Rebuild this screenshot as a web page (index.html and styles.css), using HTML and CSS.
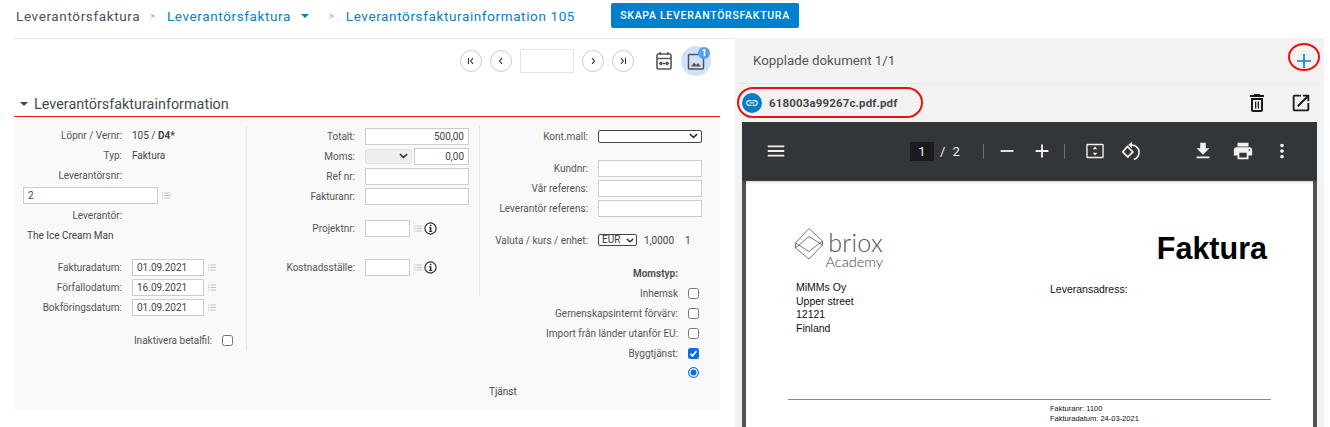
FILE: index.html
```html
<!DOCTYPE html>
<html lang="sv">
<head>
<meta charset="utf-8">
<title>Leverantörsfaktura</title>
<link rel="stylesheet" href="styles.css">
</head>
<body>
<header class="topbar">
  <span class="crumb">Leverantörsfaktura</span>
  <span class="sep">&gt;</span>
  <span class="crumb link">Leverantörsfaktura</span>
  <span class="caret-blue"></span>
  <span class="sep sep2">&gt;</span>
  <span class="crumb link">Leverantörsfakturainformation 105</span>
  <button class="create">SKAPA LEVERANTÖRSFAKTURA</button>
</header>
<main class="main">
  <section class="left">
    <div class="pager">
      <button class="round"><svg viewBox="0 0 10 10" class="pg"><path d="M2.5 2v6M7 2.2 4.6 5 7 7.8"/></svg></button>
      <button class="round"><svg viewBox="0 0 10 10" class="pg"><path d="M6 2.2 3.6 5 6 7.8"/></svg></button>
      <input class="pageinput" type="text">
      <button class="round"><svg viewBox="0 0 10 10" class="pg"><path d="M4 2.2 6.4 5 4 7.8"/></svg></button>
      <button class="round"><svg viewBox="0 0 10 10" class="pg"><path d="M3 2.2 5.4 5 3 7.8M7.5 2v6"/></svg></button>
      <svg class="cal" viewBox="0 0 18 20"><path d="M5 1v3M13 1v3"/><rect x="2" y="3" width="14" height="15" rx="1.5"/><path d="M2 7.5h14M5 12.5h8M6.5 10.8 4.8 12.5l1.7 1.7M11.5 10.8l1.7 1.7-1.7 1.7"/></svg>
      <div class="imgbtn">
        <svg viewBox="0 0 18 18" class="imgicon"><rect x="1.5" y="1.5" width="15" height="14.5" rx="1"/><path class="fill" d="M4 13.5 7 9.5l2.2 2.5L11 10l3 3.5z"/></svg>
        <span class="badge">1</span>
      </div>
    </div>
    <h2 class="section"><span class="caret-dark"></span>Leverantörsfakturainformation</h2>
    <form class="form">
      <div class="col col1">
        <div class="row first"><span class="lbl">Löpnr / Vernr:</span><span class="val">105 / <b>D4*</b></span></div>
        <div class="row"><span class="lbl">Typ:</span><span class="val">Faktura</span></div>
        <div class="row"><span class="lbl">Leverantörsnr:</span></div>
        <div class="row wide"><input class="inp supplier" type="text" value="2"><svg class="list" viewBox="0 0 8 7"><path d="M0 1h1.4M2.4 1H8M0 3.5h1.4M2.4 3.5H8M0 6h1.4M2.4 6H8"/></svg></div>
        <div class="row"><span class="lbl">Leverantör:</span></div>
        <div class="row wide"><span class="val name">The Ice Cream Man</span></div>
        <div class="row dates"><span class="lbl">Fakturadatum:</span><input class="inp date" type="text" value="01.09.2021"><svg class="list" viewBox="0 0 8 7"><path d="M0 1h1.4M2.4 1H8M0 3.5h1.4M2.4 3.5H8M0 6h1.4M2.4 6H8"/></svg></div>
        <div class="row"><span class="lbl">Förfallodatum:</span><input class="inp date" type="text" value="16.09.2021"><svg class="list" viewBox="0 0 8 7"><path d="M0 1h1.4M2.4 1H8M0 3.5h1.4M2.4 3.5H8M0 6h1.4M2.4 6H8"/></svg></div>
        <div class="row"><span class="lbl">Bokföringsdatum:</span><input class="inp date" type="text" value="01.09.2021"><svg class="list" viewBox="0 0 8 7"><path d="M0 1h1.4M2.4 1H8M0 3.5h1.4M2.4 3.5H8M0 6h1.4M2.4 6H8"/></svg></div>
        <div class="row inactive"><span class="lbl lbl-long">Inaktivera betalfil:</span><input class="chk" type="checkbox"></div>
      </div>
      <div class="col col2">
        <div class="row"><span class="lbl">Totalt:</span><input class="inp full num" type="text" value="500,00"></div>
        <div class="row"><span class="lbl">Moms:</span><select class="sel moms"><option></option></select><input class="inp vat num" type="text" value="0,00"></div>
        <div class="row"><span class="lbl">Ref nr:</span><input class="inp full" type="text"></div>
        <div class="row"><span class="lbl">Fakturanr:</span><input class="inp full" type="text"></div>
        <div class="row proj"><span class="lbl">Projektnr:</span><input class="inp short" type="text"><svg class="list" viewBox="0 0 8 7"><path d="M0 1h1.4M2.4 1H8M0 3.5h1.4M2.4 3.5H8M0 6h1.4M2.4 6H8"/></svg><svg class="info" viewBox="0 0 13 13"><circle cx="6.5" cy="6.5" r="5.6"/><path class="i" d="M5 5.3h2.4v3.9h1v.9H4.8v-.9h1V6.2H5zM5.8 2.8h1.6v1.5H5.8z"/></svg></div>
        <div class="row cost"><span class="lbl">Kostnadsställe:</span><input class="inp short" type="text"><svg class="list" viewBox="0 0 8 7"><path d="M0 1h1.4M2.4 1H8M0 3.5h1.4M2.4 3.5H8M0 6h1.4M2.4 6H8"/></svg><svg class="info" viewBox="0 0 13 13"><circle cx="6.5" cy="6.5" r="5.6"/><path class="i" d="M5 5.3h2.4v3.9h1v.9H4.8v-.9h1V6.2H5zM5.8 2.8h1.6v1.5H5.8z"/></svg></div>
      </div>
      <div class="col col3">
        <div class="row"><span class="lbl">Kont.mall:</span><select class="sel kont"><option></option></select></div>
        <div class="row cust"><span class="lbl">Kundnr:</span><input class="inp full" type="text"></div>
        <div class="row"><span class="lbl">Vår referens:</span><input class="inp full" type="text"></div>
        <div class="row"><span class="lbl">Leverantör referens:</span><input class="inp full" type="text"></div>
        <div class="row cur"><span class="lbl">Valuta / kurs / enhet:</span><select class="sel eur"><option>EUR</option></select><span class="val rate">1,0000</span><span class="val unit">1</span></div>
        <div class="row vat-head"><span class="lbl vl"><b>Momstyp:</b></span></div>
        <div class="row"><span class="lbl vl">Inhemsk</span><input class="chk" type="checkbox"></div>
        <div class="row"><span class="lbl vl">Gemenskapsinternt förvärv:</span><input class="chk" type="checkbox"></div>
        <div class="row"><span class="lbl vl">Import från länder utanför EU:</span><input class="chk" type="checkbox"></div>
        <div class="row"><span class="lbl vl">Byggtjänst:</span><input class="chk" type="checkbox" checked></div>
        <div class="row radio-row"><span class="lbl vl"></span><input class="rad" type="radio" checked></div>
        <div class="row tj"><span class="val">Tjänst</span></div>
      </div>
    </form>
  </section>
  <aside class="right">
    <div class="dochead">
      <span class="doctitle">Kopplade dokument 1/1</span>
      <svg class="plus" viewBox="0 0 14 14"><path d="M7 0v14M0 7h14"/></svg>
      <span class="ring ring-plus"></span>
    </div>
    <div class="docrow">
      <span class="linkdot"><svg viewBox="0 0 24 24"><path d="M3.9 12c0-1.71 1.39-3.1 3.1-3.1h4V7H7c-2.76 0-5 2.24-5 5s2.24 5 5 5h4v-1.9H7c-1.71 0-3.1-1.39-3.1-3.1zM8 13h8v-2H8v2zm9-6h-4v1.9h4c1.71 0 3.1 1.39 3.1 3.1s-1.39 3.1-3.1 3.1h-4V17h4c2.76 0 5-2.24 5-5s-2.24-5-5-5z"/></svg></span>
      <span class="docname">618003a99267c.pdf.pdf</span>
      <svg class="docicon trash" viewBox="0 0 24 24"><path d="M6 19c0 1.1.9 2 2 2h8c1.1 0 2-.9 2-2V7H6v12zM8 9h8v10H8V9zm7.5-5l-1-1h-5l-1 1H5v2h14V4z"/><path d="M10 10.5h1.3v7H10zM12.7 10.5H14v7h-1.3z"/></svg>
      <svg class="docicon open" viewBox="0 0 24 24"><path d="M19 19H5V5h7V3H5c-1.11 0-2 .9-2 2v14c0 1.1.89 2 2 2h14c1.1 0 2-.9 2-2v-7h-2v7zM14 3v2h3.59l-9.83 9.83 1.41 1.41L19 6.41V10h2V3h-7z"/></svg>
      <span class="ring ring-doc"></span>
    </div>
    <div class="viewer">
      <div class="pdfbar">
        <svg class="pi menu" viewBox="0 0 24 24"><path d="M3 18h18v-2H3v2zm0-5h18v-2H3v2zm0-7v2h18V6H3z"/></svg>
        <span class="pnum">1</span><span class="ptxt slash">/</span><span class="ptxt">2</span>
        <span class="pdiv d1"></span>
        <svg class="pi minus" viewBox="0 0 24 24"><path d="M5 11h14v2H5z"/></svg>
        <svg class="pi plusw" viewBox="0 0 24 24"><path d="M19 13h-6v6h-2v-6H5v-2h6V5h2v6h6v2z"/></svg>
        <span class="pdiv d2"></span>
        <svg class="pi fit" viewBox="0 0 24 24"><path d="M4 4h16a1.5 1.5 0 0 1 1.500 1.500v13A1.500 1.500 0 0 1 20 20H4a1.500 1.500 0 0 1-1.500-1.500v-13A1.500 1.500 0 0 1 4 4zm0 1.600V18.400h16V5.600z"/><path d="M12 7l2.500 3h-5zM12 17l-2.500-3h5z"/></svg>
        <svg class="pi rot" viewBox="0 0 24 24"><path d="M8 7 14 13l-5.500 5.500L3 13z" class="outline"/><path class="outline" d="M10.500 5.500H13a8 8 0 0 1 2 15.700"/><path d="M13 2v7L9 5.500z"/></svg>
        <svg class="pi dl" viewBox="0 0 24 24"><path d="M19 9h-4V3H9v6H5l7 7 7-7zM5 18v2h14v-2H5z"/></svg>
        <svg class="pi pr" viewBox="0 0 24 24"><path d="M19 8H5c-1.660 0-3 1.340-3 3v6h4v4h12v-4h4v-6c0-1.660-1.340-3-3-3zm-3 11H8v-5h8v5zm3-7c-.55 0-1-.45-1-1s.45-1 1-1 1 .45 1 1-.45 1-1 1zm-1-9H6v4h12V3z"/></svg>
        <svg class="pi more" viewBox="0 0 24 24"><path d="M12 8c1.100 0 2-.9 2-2s-.9-2-2-2-2 .9-2 2 .9 2 2 2zm0 2c-1.100 0-2 .9-2 2s.9 2 2 2 2-.9 2-2-.9-2-2-2zm0 6c-1.100 0-2 .9-2 2s.9 2 2 2 2-.9 2-2-.9-2-2-2z"/></svg>
      </div>
      <div class="pdfarea">
        <div class="page">
          <div class="page-top">
            <div class="logo">
              <svg class="cube" viewBox="0 0 28 32"><path d="M14 .5 27.500 13 14 23.500.5 15zM14 8.500 27.500 17 14 31 .5 20zM.5 15v5M27.500 13v4"/></svg>
              <div class="wordmark"><span class="briox">briox</span><span class="academy">Academy</span></div>
            </div>
            <div class="faktura">Faktura</div>
          </div>
          <div class="addr">
            <div class="addr-from">MiMMs Oy<br>Upper street<br>12121<br>Finland</div>
            <div class="addr-to">Leveransadress:</div>
          </div>
          <div class="pagerule"></div>
          <div class="meta">Fakturanr: 1100<br>Fakturadatum: 24-03-2021</div>
        </div>
      </div>
    </div>
  </aside>
</main>
</body>
</html>
```

FILE: styles.css
```css
* { box-sizing: border-box; }
html, body { margin: 0; height: 427px; overflow: hidden; background: #fff; }
body { font-family: Roboto, "Liberation Sans", sans-serif; color: #444; font-size: 10px; }

.topbar { display: flex; align-items: center; height: 39px; margin-left: 14px; width: 721px; padding: 0 0 7px 2px; border-bottom: 1px solid #e6e6e6; white-space: nowrap; }
.crumb { font-size: 13.5px; letter-spacing: .62px; color: #48525a; }
.crumb.link { color: #0580c8; }
.sep { color: #999; font-size: 9px; margin: 0 12px 0 10px; }
.sep2 { margin: 0 12px 0 20px; }
.caret-blue { width: 0; height: 0; margin-left: 10px; border: 4px solid transparent; border-top: 4.500px solid #0580c8; border-bottom: 0; }
.create { height: 25px; width: 188px; margin-left: 36px; border: 0; border-radius: 2px; background: #0080cc; color: #fff; font: 500 10.5px Roboto, sans-serif; letter-spacing: .72px; flex: none; padding: 0; }

.main { display: flex; align-items: stretch; height: 388px; }
.left { width: 706px; margin-left: 14px; flex: none; }
.pager { display: flex; align-items: center; height: 56px; width: 100%; padding: 0 9px 12px 446px; }
.round { width: 22px; height: 22px; padding: 0; border: 1px solid #ccc; border-radius: 50%; background: #fff; margin-right: 8px; display: flex; align-items: center; justify-content: center; flex: none; }
.pg { width: 10px; height: 10px; fill: none; stroke: #333; stroke-width: 1.100; }
.pageinput { width: 54px; height: 24px; border: 1px solid #e4e4e4; margin-right: 8px; flex: none; background: #fff; }
.cal { width: 18px; height: 20px; margin: 0 8px 0 13px; fill: none; stroke: #555; stroke-width: 1.600; flex: none; }
.imgbtn { width: 30px; height: 30px; border-radius: 50%; background: #cfe2fb; position: relative; display: flex; align-items: center; justify-content: center; flex: none; }
.imgicon { width: 18px; height: 18px; fill: none; stroke: #555; stroke-width: 1.500; margin-top: 2px; }
.imgicon .fill { fill: #555; stroke: none; }
.badge { position: absolute; right: 1px; top: 1px; width: 12px; height: 12px; border-radius: 50%; background: #5c9ceb; color: #fff; font-size: 9px; font-weight: 700; line-height: 12px; text-align: center; }

.section { display: flex; align-items: center; height: 22px; margin: 0; font-size: 14.4px; font-weight: 400; color: #454b50; border-bottom: 1.500px solid #f01a14; padding: 0 0 3px 6px; }
.caret-dark { width: 0; height: 0; margin-right: 6px; border: 4px solid transparent; border-top: 4px solid #444; border-bottom: 0; }

.form { display: flex; align-items: flex-start; height: 293px; background: #f9f9f9; padding-top: 9px; }
.col { flex: none; }
.col1 { width: 233px; height: 224px; border-right: 1px solid #e6e6e6; }
.col2 { width: 233px; height: 170px; border-right: 1px solid #e6e6e6; }
.col3 { width: 240px; }

.row { display: flex; align-items: center; height: 20px; white-space: nowrap; }
.first { height: 19px; }
.lbl { width: 108px; margin-right: 10px; text-align: right; flex: none; color: #555; }
.val { color: #444; }
.wide { padding-left: 9px; }
.name { padding-left: 4px; }
.dates { margin-top: 12px; }
.inactive { margin-top: 13px; }
.lbl-long { width: 198px; margin-right: 10px; }
.proj { margin-top: 12px; }
.cost { margin-top: 19px; }
.cust { margin-top: 12px; }
.cur { margin-top: 12px; }
.vat-head { margin-top: 13px; }
.vl { width: 198px; }
.radio-row { margin-top: -1px; }
.tj { padding-left: 9px; margin-top: -1px; }
.rate { margin-left: 7px; }
.unit { margin-left: 11px; }

.inp { height: 17px; border: 1px solid #ccc; background: #fff; padding: 0 4px; font: 10px Roboto, sans-serif; color: #444; border-radius: 0; outline: 0; flex: none; }
.num { text-align: right; }
.supplier { width: 135px; }
.date { width: 72px; }
.full { width: 104px; }
.short { width: 45px; }
.vat { width: 55px; margin-left: 2px; }
.list { width: 8px; height: 7px; margin-left: 4px; fill: none; stroke: #bbb; stroke-width: .9; flex: none; }
.info { width: 13px; height: 13px; margin-left: 2px; flex: none; }
.info circle { fill: #fff; stroke: #222; stroke-width: 1.100; }
.info .i { fill: #222; }

.sel { appearance: none; -webkit-appearance: none; font: 10px Roboto, sans-serif; color: #333; background: #fff url("data:image/svg+xml,%3Csvg xmlns='http://www.w3.org/2000/svg' viewBox='0 0 10 6'%3E%3Cpath d='M1 1l4 3.500L9 1' fill='none' stroke='%23333' stroke-width='1.800'/%3E%3C/svg%3E") no-repeat right 3px center / 9px 6px; border-radius: 2px; flex: none; outline: 0; padding: 0 4px; }
.moms { width: 47px; height: 15px; border: 1px solid #e2e2e2; background-color: #efefef; }
.kont { width: 104px; height: 13px; border: 1px solid #444; }
.eur { width: 39px; height: 12px; border: 1px solid #444; line-height: 10px; padding: 0 3px; background-position: right 2px center; background-size: 8px 5px; }

.chk, .rad { appearance: none; -webkit-appearance: none; width: 11px; height: 11px; margin: 0; flex: none; background: #fff; }
.chk { border: 1px solid #767676; border-radius: 2.500px; }
.chk:checked { border: 0; background: #0b6cf0 url("data:image/svg+xml,%3Csvg xmlns='http://www.w3.org/2000/svg' viewBox='0 0 11 11'%3E%3Cpath d='M2.500 5.800l2 2 4-4.800' fill='none' stroke='%23fff' stroke-width='1.800'/%3E%3C/svg%3E") center no-repeat; }
.rad { border-radius: 50%; border: 1px solid #0b6cf0; box-shadow: inset 0 0 0 1.500px #fff; background: #0b6cf0; }

.right { width: 589px; flex: none; margin-left: 15px; margin-top: -1px; background: #f2f2f2; display: flex; flex-direction: column; height: 389px; }
.dochead { flex: none; height: 46px; display: flex; align-items: center; justify-content: space-between; position: relative; margin: 0 4px 0 3px; padding: 0 9px 0 15px; border-bottom: 1px solid #e8e8e8; }
.doctitle { font-size: 13.3px; color: #50585e; }
.plus { width: 14px; height: 14px; fill: none; stroke: #0580c8; stroke-width: 1.600; }
.ring { position: absolute; border: 2px solid #ee0f0f; border-radius: 50%; pointer-events: none; }
.ring-plus { width: 32px; height: 28px; right: 0; top: 5px; }
.docrow { flex: none; height: 38px; display: flex; align-items: center; position: relative; padding-left: 7px; }
.linkdot { width: 20px; height: 20px; border-radius: 50%; background: #0580c8; display: flex; align-items: center; justify-content: center; flex: none; }
.linkdot svg { width: 14px; height: 14px; fill: #fff; }
.docname { font-size: 11.500px; font-weight: 700; color: #48484a; margin-left: 7px; letter-spacing: .14px; }
.docicon { width: 24px; height: 24px; fill: #1a1a1a; flex: none; }
.trash { margin-left: 348px; }
.open { margin-left: 21px; width: 22px; height: 22px; }
.ring-doc { left: 2px; top: 3px; width: 186px; height: 31px; border-radius: 16px / 15.500px; }

.viewer { flex: 1; margin: 0 7px; background: #505558; overflow: hidden; display: flex; flex-direction: column; }
.pdfbar { flex: none; height: 58px; background: #323639; display: flex; align-items: center; padding-left: 23px; color: #eee; box-shadow: 0 1px 3px rgba(0,0,0,.4); position: relative; }
.pi { width: 22px; height: 22px; fill: #f1f1f1; flex: none; }
.pnum { width: 24px; height: 19px; background: #191b1c; font-size: 13px; line-height: 19px; text-align: center; margin-left: 123px; color: #eee; }
.ptxt { font-size: 13px; color: #eee; }
.slash { margin: 0 7px 0 6px; }
.pdiv { width: 1px; height: 15px; background: #6b6f72; flex: none; }
.d1 { margin-left: 23px; }
.minus { margin-left: 12px; }
.plusw { margin-left: 13px; }
.d2 { margin-left: 11px; }
.fit { margin-left: 19px; }
.rot { margin-left: 14px; }
.rot .outline { fill: none; stroke: #f1f1f1; stroke-width: 1.800; }
.dl { margin-left: 50px; }
.pr { margin-left: 18px; }
.more { margin-left: 17px; }

.pdfarea { flex: 1; padding: 1px 4px 0; overflow: hidden; }
.page { background: #fff; height: 300px; font-family: "Liberation Sans", Arial, sans-serif; color: #111; padding: 46px 42px 0 42px; }
.page-top { display: flex; justify-content: space-between; align-items: flex-start; height: 54px; padding: 0 4px 0 7px; }
.logo { display: flex; color: #555; }
.cube { width: 28px; height: 32px; fill: none; stroke: #555; stroke-width: .8; flex: none; margin-top: 1px; }
.wordmark { display: flex; flex-direction: column; align-items: flex-end; width: 60px; margin-top: 3px; font-family: Lato, sans-serif; font-weight: 300; }
.briox { font-size: 25px; line-height: 24px; letter-spacing: .3px; }
.academy { font-size: 14.500px; line-height: 16px; white-space: nowrap; color: #444; }
.faktura { font-size: 30.500px; font-weight: 700; color: #000; line-height: 38px; margin-top: 2px; }
.addr { display: flex; padding-left: 8px; font-size: 10.500px; line-height: 13.500px; }
.addr-from { width: 254px; flex: none; }
.addr-to { padding-top: 2px; }
.pagerule { height: 1px; background: #8a8a8a; margin-top: 64px; }
.meta { font-size: 7.500px; line-height: 10px; padding-left: 262px; margin-top: 4px; }
```
